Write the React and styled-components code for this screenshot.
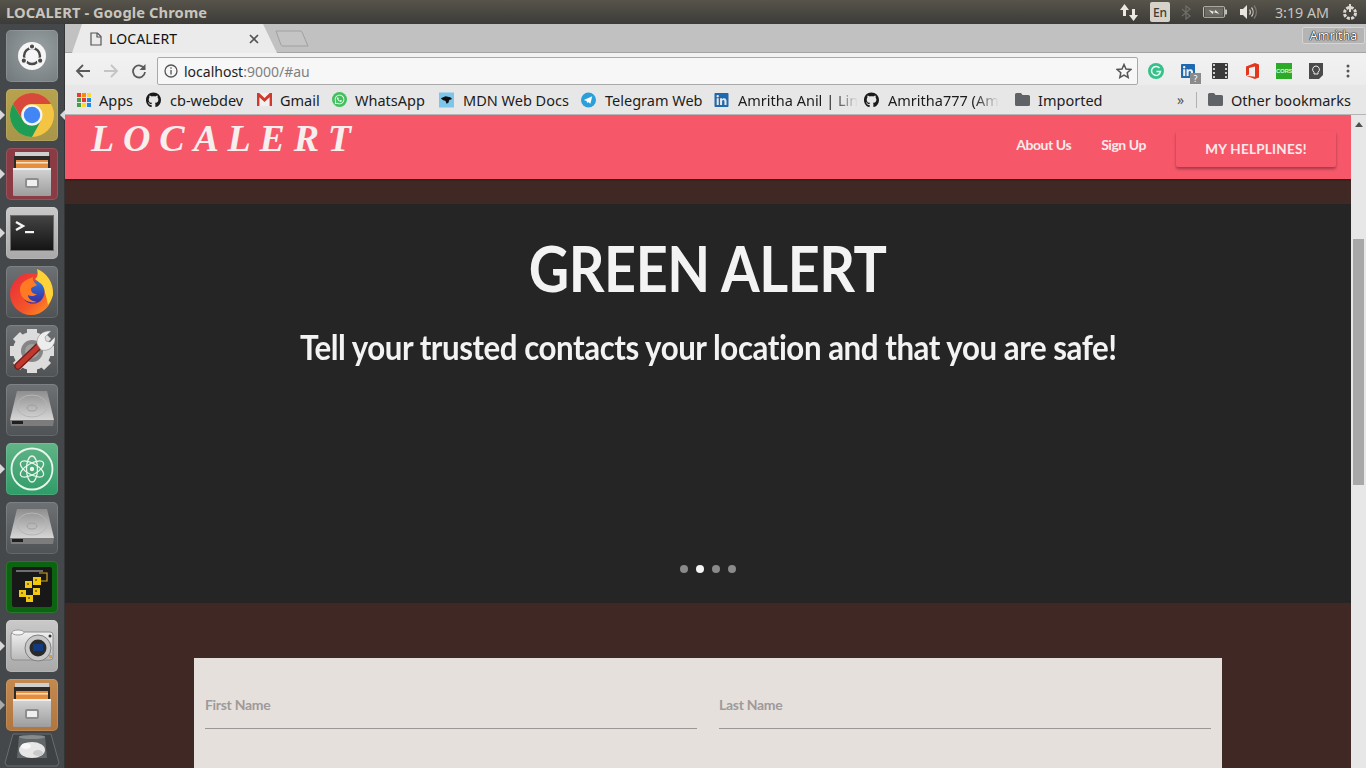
import React from "react";
import styled, { createGlobalStyle } from "styled-components";
import { FaGithub, FaWhatsapp, FaLinkedin } from "react-icons/fa";

const GlobalStyle = createGlobalStyle`
  html, body {
    margin: 0;
    padding: 0;
    height: 100%;
    overflow: hidden;
    background: #402825;
  }
  * { box-sizing: border-box; }
`;

const UI_FONT = `"Noto Sans", "Open Sans", sans-serif`;
const PAGE_FONT = `Lato, "Open Sans", sans-serif`;

const Desktop = styled.div`
  width: 1366px;
  height: 768px;
  display: flex;
  flex-direction: column;
  overflow: hidden;
`;

const TopBar = styled.div`
  height: 24px;
  flex: none;
  display: flex;
  align-items: center;
  justify-content: space-between;
  padding-left: 6px;
  background: linear-gradient(#57544c, #3c3b37);
  font-family: ${UI_FONT};
`;

const WindowTitle = styled.div`
  font-size: 14.7px;
  font-weight: 700;
  color: #c9c5bc;
  letter-spacing: 0.1px;
`;

const Tray = styled.div`
  display: flex;
  align-items: center;
  height: 24px;
`;

const TraySlot = styled.div`
  width: ${(p) => p.$w}px;
  height: 24px;
  flex: none;
  display: flex;
  align-items: center;
  justify-content: center;
`;

const LangBadge = styled.div`
  width: 20px;
  height: 20px;
  border-radius: 2px;
  background: #d6d2c9;
  color: #3c3b37;
  font-size: 12px;
  font-weight: 500;
  display: flex;
  align-items: center;
  justify-content: center;
`;

const Clock = styled.div`
  font-size: 14.3px;
  color: #c9c5bc;
  white-space: nowrap;
`;

const Body = styled.div`
  flex: 1;
  display: flex;
  min-height: 0;
`;

const Launcher = styled.div`
  width: 65px;
  flex: none;
  display: flex;
  flex-direction: column;
  gap: 7px;
  padding: 6px 7px 0 6px;
  background: #45484a;
  border-right: 1px solid #333537;
`;

const Tile = styled.div`
  position: relative;
  width: 52px;
  height: 52px;
  flex: none;
  border-radius: 5px;
  background: ${(p) => p.$bg};
  box-shadow: inset 0 0 0 1px rgba(255, 255, 255, 0.12);
  display: flex;
  align-items: center;
  justify-content: center;
`;

const TrashTile = styled.div`
  width: 56px;
  height: 36px;
  flex: none;
  margin: -5px 0 0 -2px;
`;

const Pip = styled.span`
  position: absolute;
  left: -6px;
  top: 21px;
  border-left: 5px solid ${(p) => (p.$hollow ? "#aaa" : "#d8d8d8")};
  border-top: 5px solid transparent;
  border-bottom: 5px solid transparent;
`;

const ActiveArrow = styled.span`
  position: absolute;
  right: -7px;
  top: 21px;
  border-right: 5px solid #d8d8d8;
  border-top: 5px solid transparent;
  border-bottom: 5px solid transparent;
`;

const ChromeWindow = styled.div`
  flex: 1;
  min-width: 0;
  display: flex;
  flex-direction: column;
`;

const TabStrip = styled.div`
  height: 29px;
  flex: none;
  display: flex;
  align-items: flex-start;
  justify-content: space-between;
  background: #c1c1c1;
  border-bottom: 1px solid #a4a4a4;
  font-family: ${UI_FONT};
`;

const TabGroup = styled.div`
  display: flex;
  align-items: flex-start;
  height: 28px;
  padding-left: 7px;
`;

const Tab = styled.div`
  width: 205px;
  height: 29px;
  padding: 0 18px 0 18px;
  display: flex;
  align-items: center;
  gap: 7px;
  background: #ebebeb;
  clip-path: polygon(0 100%, 10px 0, 191px 0, 205px 100%);
  font-size: 14px;
  color: #111;
`;

const TabTitle = styled.span`
  flex: 1;
  letter-spacing: 0.1px;
`;

const NewTab = styled.svg`
  width: 36px;
  height: 18px;
  margin: 6px 0 0 -3px;
`;

const ProfileChip = styled.div`
  width: 63px;
  height: 17px;
  margin: 3px 1px 0 0;
  border: 1px solid #d4d4d4;
  border-radius: 2px;
  background: #b4b4b4;
  color: #fff;
  font-size: 12.5px;
  line-height: 15px;
  text-align: center;
  text-shadow: 0 0 1px #000, 0 0 1px #000, 0 0 1px #000;
`;

const Toolbar = styled.div`
  height: 32px;
  flex: none;
  display: flex;
  align-items: flex-start;
  padding-top: 4px;
  background: linear-gradient(#f2f2f2, #ececec);
  font-family: ${UI_FONT};
`;

const NavButton = styled.div`
  width: 28px;
  height: 28px;
  flex: none;
  display: flex;
  align-items: center;
  justify-content: center;
`;

const NavGroup = styled.div`
  display: flex;
  width: 92px;
  padding-left: 4px;
`;

const Omnibox = styled.div`
  width: 981px;
  height: 28px;
  flex: none;
  display: flex;
  align-items: center;
  padding: 0 5px 0 6px;
  gap: 6px;
  background: #f7f7f7;
  border: 1px solid #a9a9a9;
  border-radius: 2px;
  font-size: 14px;
`;

const UrlText = styled.div`
  flex: 1;
  color: #222;
`;

const UrlMuted = styled.span`
  color: #808080;
`;

const Extensions = styled.div`
  display: flex;
  align-items: center;
  flex: 1;
  padding-left: 2px;
`;

const ExtSlot = styled.div`
  position: relative;
  width: 32px;
  height: 28px;
  flex: none;
  display: flex;
  align-items: center;
  justify-content: center;
`;

const ExtBadge = styled.span`
  position: absolute;
  right: 3px;
  bottom: 1px;
  width: 11px;
  height: 11px;
  background: #8a8a8a;
  color: #fff;
  font-size: 9px;
  line-height: 11px;
  text-align: center;
`;

const CorsTag = styled.span`
  width: 16px;
  height: 16px;
  background: #2bab27;
  color: #d8f5d4;
  font-family: "Liberation Sans", sans-serif;
  font-size: 6px;
  font-weight: 700;
  line-height: 16px;
  text-align: center;
  letter-spacing: -0.3px;
`;

const BookmarkBar = styled.div`
  height: 30px;
  flex: none;
  display: flex;
  align-items: center;
  padding-left: 11px;
  background: #e7e7e7;
  border-bottom: 1px solid #b5b5b5;
  font-family: ${UI_FONT};
`;

const Bookmark = styled.div`
  width: ${(p) => p.$w}px;
  flex: none;
  display: flex;
  align-items: center;
  gap: ${(p) => p.$gap ?? 9}px;
  font-size: 14.5px;
  color: #1c1c1c;
  white-space: nowrap;
`;

const BookmarkIcon = styled.span`
  width: 15px;
  height: 16px;
  flex: none;
  display: flex;
  align-items: center;
  justify-content: center;
`;

const WhatsBadge = styled.span`
  width: 15px;
  height: 15px;
  border-radius: 50%;
  background: #3fc15c;
  display: flex;
  align-items: center;
  justify-content: center;
`;

const BookmarkLabel = styled.span`
  ${(p) =>
    p.$fade &&
    `
    -webkit-mask-image: linear-gradient(90deg, #000 78%, transparent);
    mask-image: linear-gradient(90deg, #000 78%, transparent);
  `}
`;

const Chevrons = styled.div`
  width: 19px;
  flex: none;
  color: #555;
  font-size: 14px;
`;

const BarDivider = styled.div`
  width: 1px;
  height: 16px;
  flex: none;
  margin-right: 11px;
  background: #b0b0b0;
`;

const Viewport = styled.div`
  flex: 1;
  min-height: 0;
  display: flex;
  overflow: hidden;
`;

const Page = styled.div`
  flex: 1;
  min-width: 0;
  display: flex;
  flex-direction: column;
  background: #402825;
  font-family: ${PAGE_FONT};
`;

const Navbar = styled.header`
  height: 64px;
  flex: none;
  display: flex;
  align-items: flex-start;
  justify-content: space-between;
  padding: 0 15px 0 26px;
  background: #f6586a;
  box-shadow: 0 1px 2px rgba(0, 0, 0, 0.35);
`;

const Logo = styled.div`
  font-family: "Liberation Serif", serif;
  font-style: italic;
  font-weight: 700;
  font-size: 38px;
  line-height: 46px;
  letter-spacing: 8.8px;
  color: #f7eeee;
  white-space: nowrap;
`;

const NavLinks = styled.nav`
  display: flex;
  align-items: center;
  height: 60px;
  margin-top: 1px;
`;

const NavLink = styled.a`
  font-size: 14px;
  font-weight: 700;
  color: #fbeaec;
  margin-right: 30px;
  margin-top: -4px;
  letter-spacing: -0.45px;
`;

const HelplineButton = styled.button`
  width: 160px;
  height: 36px;
  margin-top: 6px;
  border: none;
  border-radius: 2px;
  background: #f6586a;
  box-shadow: 0 2px 3px rgba(0, 0, 0, 0.35);
  color: #fbeaec;
  font-family: ${PAGE_FONT};
  font-size: 13.5px;
  font-weight: 700;
  letter-spacing: 0.25px;
`;

const Carousel = styled.section`
  height: 399px;
  flex: none;
  margin-top: 25px;
  padding-top: 29px;
  display: flex;
  flex-direction: column;
  align-items: center;
  background: #252525;
  color: #f3f3f3;
`;

const Headline = styled.h1`
  margin: 0;
  font-size: 64px;
  line-height: 70px;
  font-weight: 700;
  letter-spacing: -0.5px;
  transform: scaleX(0.87);
`;

const Subhead = styled.h2`
  margin: 22px 0 0;
  font-size: 35px;
  line-height: 42px;
  font-weight: 700;
  letter-spacing: -0.5px;
  white-space: nowrap;
  transform: scaleX(0.893);
`;

const Dots = styled.div`
  margin-top: auto;
  margin-bottom: 30px;
  display: flex;
  gap: 8px;
`;

const Dot = styled.span`
  width: 8px;
  height: 8px;
  border-radius: 50%;
  background: ${(p) => (p.$active ? "#f4f4f4" : "#8a8a8a")};
`;

const FormCard = styled.form`
  width: 1028px;
  height: 300px;
  flex: none;
  margin: 55px 0 0 129px;
  padding: 36px 11px 0;
  display: grid;
  grid-template-columns: 1fr 1fr;
  grid-auto-rows: min-content;
  column-gap: 22px;
  background: #e6e0dd;
`;

const Field = styled.div`
  height: 35px;
  padding-bottom: 14px;
  display: flex;
  align-items: center;
  border-bottom: 1px solid #9b9797;
  font-size: 14px;
  font-weight: 700;
  color: #9e9a99;
  letter-spacing: -0.3px;
`;

const Scrollbar = styled.div`
  width: 15px;
  flex: none;
  display: flex;
  flex-direction: column;
  align-items: center;
  background: #e7e7e7;
`;

const ScrollUp = styled.span`
  margin-top: 7px;
  border-bottom: 5px solid #505050;
  border-left: 4px solid transparent;
  border-right: 4px solid transparent;
`;

const ScrollThumb = styled.div`
  width: 11px;
  height: 246px;
  margin-top: 112px;
  background: #a8a8a8;
`;

function UbuntuIcon() {
  return (
    <svg width="32" height="32" viewBox="0 0 32 32">
      <circle cx="16" cy="16" r="14" fill="#f6f6f6" />
      <circle cx="16" cy="16" r="8" fill="none" stroke="#4a4a4a" strokeWidth="2.4" />
      <circle cx="16" cy="6.500" r="2.700" fill="#4a4a4a" stroke="#f6f6f6" strokeWidth="1.200" />
      <circle cx="7.800" cy="20.700" r="2.700" fill="#4a4a4a" stroke="#f6f6f6" strokeWidth="1.200" />
      <circle cx="24.200" cy="20.700" r="2.700" fill="#4a4a4a" stroke="#f6f6f6" strokeWidth="1.200" />
    </svg>
  );
}

function ChromeIcon() {
  return (
    <svg width="46" height="46" viewBox="0 0 46 46">
      <circle cx="23" cy="23" r="22" fill="#f4c542" />
      <path d="M3.950 12A22 22 0 0 1 42.050 12H23A10.600 10.600 0 0 0 13.820 28.300z" fill="#d9493b" />
      <path d="M23 45A22 22 0 0 1 3.950 12L13.820 28.300A10.600 10.600 0 0 0 32.180 28.300z" fill="#1f9d55" />
      <circle cx="23" cy="23" r="10.600" fill="#f4f4f4" />
      <circle cx="23" cy="23" r="8.200" fill="#4285f4" />
    </svg>
  );
}

function CabinetIcon({ id }) {
  return (
    <svg width="40" height="44" viewBox="0 0 40 44">
      <defs>
        <linearGradient id={id} x1="0" y1="0" x2="0" y2="1">
          <stop offset="0" stopColor="#d4d4d4" />
          <stop offset="1" stopColor="#9d9d9d" />
        </linearGradient>
      </defs>
      <rect x="3" y="0" width="34" height="5" fill="#cfcfcf" />
      <rect x="2" y="4" width="36" height="13" fill="#2e2a28" />
      <rect x="4" y="8" width="32" height="9" fill="#e78d3e" />
      <rect x="4" y="10" width="32" height="1.500" fill="#f8e2c4" />
      <rect x="1" y="16" width="38" height="28" rx="1" fill={`url(#${id})`} />
      <rect x="1" y="16" width="38" height="2" fill="#efefef" />
      <rect x="13" y="26" width="14" height="10" rx="2" fill="#8d8d8d" />
      <rect x="15" y="28" width="10" height="6" rx="0.500" fill="#efefef" />
    </svg>
  );
}

function TerminalIcon() {
  return (
    <svg width="44" height="36" viewBox="0 0 44 36">
      <defs>
        <linearGradient id="term" x1="0" y1="0" x2="0" y2="1">
          <stop offset="0" stopColor="#444" />
          <stop offset="1" stopColor="#141414" />
        </linearGradient>
      </defs>
      <rect x="0.500" y="0.500" width="43" height="35" fill="url(#term)" stroke="#6d6d6d" />
      <path d="M6 7l7 4-7 4" fill="none" stroke="#f4f4f4" strokeWidth="2.400" />
      <rect x="15" y="16" width="9" height="2.200" fill="#f4f4f4" />
    </svg>
  );
}

function FirefoxIcon() {
  return (
    <svg width="46" height="48" viewBox="0 0 46 48">
      <defs>
        <linearGradient id="fxRing" x1="0" y1="0" x2="1" y2="1">
          <stop offset="0" stopColor="#e8283c" />
          <stop offset="0.6" stopColor="#f4552a" />
          <stop offset="1" stopColor="#ff9a1f" />
        </linearGradient>
        <linearGradient id="fxGlobe" x1="0" y1="0" x2="0" y2="1">
          <stop offset="0" stopColor="#2f7bd9" />
          <stop offset="1" stopColor="#3a2a9e" />
        </linearGradient>
      </defs>
      <circle cx="22" cy="26" r="21" fill="url(#fxRing)" />
      <path d="M28 1c10 4 17 14 16 26-1 4-3 7-5 10-2-10-4-20-13-26 3-2 3-6 2-10z" fill="#ffd23a" />
      <circle cx="24" cy="24" r="11.500" fill="url(#fxGlobe)" />
      <path d="M24 9c-4 2-9 3-12 8-2 4-1 10 3 14 3 3 9 4 13 3-5-1-9-3-9-7 3 2 7 1 9-1-4 0-6-2-6-5 1-3 4-2 6-4-3-3-5-5-4-8z" fill="#ff7a22" />
    </svg>
  );
}

function GearWrenchIcon() {
  const teeth = [0, 45, 90, 135, 180, 225, 270, 315];
  return (
    <svg width="46" height="46" viewBox="0 0 46 46">
      <g fill="#dcdcdc">
        {teeth.map((a) => (
          <rect key={a} x="18" y="1" width="10" height="10" transform={`rotate(${a} 23 23)`} />
        ))}
      </g>
      <circle cx="23" cy="23" r="13" fill="none" stroke="#dcdcdc" strokeWidth="12" />
      <circle cx="23" cy="23" r="11" fill="#858585" />
      <circle cx="23" cy="23" r="7" fill="#a0a0a0" />
      <path d="M9 38L32 16" stroke="#6f1d17" strokeWidth="7.500" strokeLinecap="round" />
      <path d="M9 38L32 16" stroke="#c0392f" strokeWidth="5" strokeLinecap="round" />
      <path d="M28 16c-1-7 5-14 14-13l-6 6 1 4 4 1 5-5c1 9-6 15-14 13z" fill="#ededed" stroke="#8a8a8a" strokeWidth="0.600" />
    </svg>
  );
}

function DriveIcon({ id }) {
  return (
    <svg width="46" height="40" viewBox="0 0 46 40">
      <defs>
        <linearGradient id={id} x1="0" y1="0" x2="0" y2="1">
          <stop offset="0" stopColor="#8e8e8e" />
          <stop offset="1" stopColor="#d6d6d6" />
        </linearGradient>
      </defs>
      <path d="M8 1h30l7 29H1z" fill={`url(#${id})`} />
      <ellipse cx="23" cy="16" rx="15" ry="11" fill="none" stroke="#b5b5b5" />
      <ellipse cx="23" cy="18" rx="5" ry="3" fill="none" stroke="#a0a0a0" />
      <path d="M1 30h44l-1 6H2z" fill="#7c7c7c" />
      <rect x="3" y="31" width="11" height="3" fill="#1f1f1f" />
    </svg>
  );
}

function AtomIcon() {
  return (
    <svg width="44" height="44" viewBox="0 0 44 44" fill="none" stroke="#e8f5ec" strokeWidth="1.300">
      <circle cx="22" cy="22" r="20.500" strokeWidth="1.800" />
      <ellipse cx="22" cy="22" rx="13" ry="5.500" transform="rotate(30 22 22)" />
      <ellipse cx="22" cy="22" rx="13" ry="5.500" transform="rotate(-30 22 22)" />
      <ellipse cx="22" cy="22" rx="13" ry="5.500" transform="rotate(90 22 22)" />
      <circle cx="22" cy="22" r="2.200" fill="#e8f5ec" stroke="none" />
    </svg>
  );
}

function ChipIcon() {
  const squares = [
    [21, 10, 7],
    [13, 14, 6],
    [21, 21, 6],
    [7, 23, 6],
    [14, 28, 6],
  ];
  return (
    <svg width="40" height="40" viewBox="0 0 40 40">
      <rect width="40" height="40" rx="2" fill="#181818" />
      <rect x="4" y="3" width="27" height="2" fill="#6e6e6e" />
      <path d="M27 6h8v8h-7" fill="none" stroke="#d0a820" strokeWidth="1.200" />
      {squares.map(([x, y, s], i) => (
        <g key={i}>
          <rect x={x} y={y} width={s + 1} height={s + 1} fill="#f2c90f" />
          <rect x={x + 2} y={y + 2} width="2" height="2" fill="#8f7606" />
        </g>
      ))}
    </svg>
  );
}

function CameraIcon() {
  return (
    <svg width="44" height="36" viewBox="0 0 44 36">
      <defs>
        <linearGradient id="camBody" x1="0" y1="0" x2="0" y2="1">
          <stop offset="0" stopColor="#f0f0f0" />
          <stop offset="1" stopColor="#b9b9b9" />
        </linearGradient>
      </defs>
      <rect x="1" y="4" width="42" height="28" rx="3" fill="url(#camBody)" stroke="#8e8e8e" />
      <ellipse cx="8" cy="4.500" rx="6" ry="2.500" fill="#f4f4f4" stroke="#999" />
      <circle cx="28" cy="20" r="13" fill="#c8c8c8" stroke="#7f7f7f" />
      <circle cx="28" cy="20" r="8.500" fill="#2a2a2a" />
      <rect x="23" y="16" width="10" height="7" fill="#123a80" />
      <circle cx="40" cy="8" r="1.500" fill="#333" />
      <rect x="39" y="27" width="3" height="3" fill="#e69a2e" />
    </svg>
  );
}

function TrashIcon() {
  return (
    <svg width="56" height="34" viewBox="0 0 56 34">
      <path d="M9 1h38l8 29-2 3H3l-2-3z" fill="#3e4244" stroke="#6a6d6e" />
      <path d="M15 3h26l2 22H13z" fill="#62676a" />
      <ellipse cx="28" cy="4" rx="13" ry="2" fill="#878b8c" />
      <ellipse cx="28" cy="17" rx="13" ry="8" fill="#e6e6e6" />
      <ellipse cx="22" cy="13" rx="5" ry="3" fill="#f7f7f7" />
      <ellipse cx="34" cy="20" rx="5" ry="3" fill="#c9c9c9" />
    </svg>
  );
}

function GmailIcon() {
  return (
    <svg width="15" height="13" viewBox="0 0 15 13">
      <rect width="15" height="13" fill="#f1f1f1" />
      <path d="M0 0h2.200l5.300 5 5.300-5H15v13h-2.400V4.200L7.500 9 2.400 4.200V13H0z" fill="#d0392b" />
    </svg>
  );
}

function AppsGrid() {
  const colors = ["#e53935", "#fb8c00", "#fdd835", "#43a047", "#e53935", "#1e88e5", "#43a047", "#fdd835", "#1e88e5"];
  return (
    <svg width="14" height="14" viewBox="0 0 14 14">
      {colors.map((c, i) => (
        <rect key={i} x={(i % 3) * 5} y={Math.floor(i / 3) * 5} width="4" height="4" fill={c} />
      ))}
    </svg>
  );
}

function MdnIcon() {
  return (
    <svg width="16" height="16" viewBox="0 0 16 16">
      <rect width="16" height="16" fill="#7cc6ec" />
      <path d="M2 6l5-2 5 1 2 2-3 1-1 3-2 1-1-3-3-1z" fill="#111" />
    </svg>
  );
}

function FolderIcon() {
  return (
    <svg width="15" height="13" viewBox="0 0 15 13">
      <path d="M0 1.500A1.500 1.500 0 0 1 1.500 0H6l1.500 2h6A1.500 1.500 0 0 1 15 3.500v8a1.500 1.500 0 0 1-1.500 1.500h-12A1.500 1.500 0 0 1 0 11.500z" fill="#5f6368" />
    </svg>
  );
}

const DARK_TILE = "linear-gradient(#6e7173,#505355)";
const LIGHT_TILE = "linear-gradient(#c9c9c9,#a9a9a9)";

const DOCK = [
  { bg: "radial-gradient(circle at 60% 40%,#9ba2a4,#70777a)", icon: <UbuntuIcon /> },
  { bg: "linear-gradient(#b7a34e,#a89549)", icon: <ChromeIcon />, pip: true, active: true },
  { bg: "#8a3b44", icon: <CabinetIcon id="cabA" />, pip: true },
  { bg: LIGHT_TILE, icon: <TerminalIcon />, pip: true },
  { bg: DARK_TILE, icon: <FirefoxIcon /> },
  { bg: DARK_TILE, icon: <GearWrenchIcon /> },
  { bg: DARK_TILE, icon: <DriveIcon id="hddA" /> },
  { bg: "linear-gradient(#62b487,#2f9c68)", icon: <AtomIcon />, pip: true },
  { bg: DARK_TILE, icon: <DriveIcon id="hddB" /> },
  { bg: "#0d6410", icon: <ChipIcon /> },
  { bg: LIGHT_TILE, icon: <CameraIcon />, pip: true },
  { bg: "linear-gradient(#c4894f,#b0763e)", icon: <CabinetIcon id="cabB" />, pip: true, hollow: true },
];

const BOOKMARKS = [
  { w: 70, gap: 8, label: "Apps", icon: <AppsGrid /> },
  { w: 111, label: "cb-webdev", icon: <FaGithub size={16} color="#1a1a1a" /> },
  { w: 75, gap: 8, label: "Gmail", icon: <GmailIcon /> },
  {
    w: 107,
    gap: 8,
    label: "WhatsApp",
    icon: (
      <WhatsBadge>
        <FaWhatsapp size={11} color="#fff" />
      </WhatsBadge>
    ),
  },
  { w: 142, label: "MDN Web Docs", icon: <MdnIcon /> },
  {
    w: 133,
    label: "Telegram Web",
    icon: (
      <svg width="16" height="16" viewBox="0 0 16 16">
        <circle cx="8" cy="8" r="8" fill="#2a9fd9" />
        <path d="M3 8l9-4-2 8-2.500-2-1 1.500-.5-2.500z" fill="#fff" />
      </svg>
    ),
  },
  { w: 150, label: "Amritha Anil | Lin", fade: true, icon: <FaLinkedin size={16} color="#1e69b0" /> },
  { w: 151, label: "Amritha777 (Am", fade: true, icon: <FaGithub size={16} color="#1a1a1a" /> },
  { w: 162, gap: 8, label: "Imported", icon: <FolderIcon /> },
];

export default function App() {
  return (
    <>
      <GlobalStyle />
      <Desktop>
        <TopBar>
          <WindowTitle>LOCALERT - Google Chrome</WindowTitle>
          <Tray>
            <TraySlot $w={42}>
              <svg width="18" height="17" viewBox="0 0 18 17" fill="#ece9e3">
                <path d="M4.500 0l4.500 6H6v6H3V6H0zM13.500 17L9 11h3V5h3v6h3z" />
              </svg>
            </TraySlot>
            <TraySlot $w={20}>
              <LangBadge>En</LangBadge>
            </TraySlot>
            <TraySlot $w={32}>
              <svg width="10" height="15" viewBox="0 0 10 15" fill="none" stroke="#6e6c66" strokeWidth="1.300">
                <path d="M1 4l8 7-4 3V1l4 3-8 7" />
              </svg>
            </TraySlot>
            <TraySlot $w={26}>
              <svg width="24" height="12" viewBox="0 0 25 12">
                <rect x="0.500" y="0.500" width="22" height="11" rx="1" fill="none" stroke="#c9c5bc" />
                <rect x="23" y="3.500" width="2" height="5" fill="#c9c5bc" />
                <rect x="2" y="2" width="19" height="8" fill="#6e6c66" />
                <path d="M6 4l6 2 1-2 4 4-6-2-1 2z" fill="#f0eee8" />
              </svg>
            </TraySlot>
            <TraySlot $w={42}>
              <svg width="20" height="16" viewBox="0 0 20 16" fill="none" stroke="#c9c5bc">
                <path d="M1 5h3l4-4v14l-4-4H1z" fill="#e8e5df" stroke="none" />
                <path d="M10.500 5.500a4 4 0 0 1 0 5M12.500 3.500a7 7 0 0 1 0 9" strokeWidth="1.200" />
                <path d="M15 1.500a10 10 0 0 1 0 13" stroke="#7b7972" strokeWidth="1.200" />
              </svg>
            </TraySlot>
            <TraySlot $w={64}>
              <Clock>3:19 AM</Clock>
            </TraySlot>
            <TraySlot $w={32}>
              <svg width="18" height="18" viewBox="0 0 18 18" fill="none" stroke="#dcd9d2" strokeWidth="2">
                <circle cx="9" cy="10" r="5.500" strokeDasharray="3 1.300" strokeWidth="3" />
                <path d="M9 1v8" stroke="#dcd9d2" />
              </svg>
            </TraySlot>
          </Tray>
        </TopBar>
        <Body>
          <Launcher>
            {DOCK.map((item, i) => (
              <Tile key={i} $bg={item.bg}>
                {item.pip && <Pip $hollow={item.hollow} />}
                {item.icon}
                {item.active && <ActiveArrow />}
              </Tile>
            ))}
            <TrashTile>
              <TrashIcon />
            </TrashTile>
          </Launcher>
          <ChromeWindow>
            <TabStrip>
              <TabGroup>
                <Tab>
                  <svg width="12" height="14" viewBox="0 0 12 14" fill="none" stroke="#555" strokeWidth="1.200">
                    <path d="M1 1h6.500L11 4.500V13H1z" />
                    <path d="M7 1v4h4" />
                  </svg>
                  <TabTitle>LOCALERT</TabTitle>
                  <svg width="10" height="10" viewBox="0 0 10 10" stroke="#555" strokeWidth="1.700">
                    <path d="M1 1l8 8M9 1l-8 8" />
                  </svg>
                </Tab>
                <NewTab viewBox="0 0 36 18">
                  <path d="M2 1h24a2 2 0 0 1 2 1l6 14H9a2 2 0 0 1-2-1z" fill="#c4c4c4" stroke="#a0a0a0" />
                </NewTab>
              </TabGroup>
              <ProfileChip>Amritha</ProfileChip>
            </TabStrip>
            <Toolbar>
              <NavGroup>
                <NavButton>
                  <svg width="16" height="16" viewBox="0 0 16 16" fill="none" stroke="#5a5a5a" strokeWidth="1.800">
                    <path d="M15 8H2M8 2L2 8l6 6" />
                  </svg>
                </NavButton>
                <NavButton>
                  <svg width="16" height="16" viewBox="0 0 16 16" fill="none" stroke="#c4c4c4" strokeWidth="1.800">
                    <path d="M1 8h13M8 2l6 6-6 6" />
                  </svg>
                </NavButton>
                <NavButton>
                  <svg width="16" height="16" viewBox="0 0 16 16" fill="none" stroke="#5a5a5a" strokeWidth="1.800">
                    <path d="M13.500 6A6 6 0 1 0 14 9" />
                    <path d="M14.500 1v6h-6z" fill="#5a5a5a" stroke="none" />
                  </svg>
                </NavButton>
              </NavGroup>
              <Omnibox>
                <svg width="14" height="14" viewBox="0 0 14 14" fill="none" stroke="#555" strokeWidth="1.300">
                  <circle cx="7" cy="7" r="6" />
                  <path d="M7 6v4.500M7 3.300v1.500" />
                </svg>
                <UrlText>
                  localhost<UrlMuted>:9000/#au</UrlMuted>
                </UrlText>
                <svg width="16" height="16" viewBox="0 0 16 16" fill="none" stroke="#555" strokeWidth="1.500">
                  <path d="M8 1.500l2 4.500 4.800.5-3.600 3.200 1 4.800L8 12.100l-4.200 2.400 1-4.800L1.200 6.500 6 6z" />
                </svg>
              </Omnibox>
              <Extensions>
                <ExtSlot>
                  <svg width="16" height="16" viewBox="0 0 16 16">
                    <circle cx="8" cy="8" r="8" fill="#37c08a" />
                    <path d="M11.500 5A4.500 4.500 0 1 0 12.500 8.500H8.500" fill="none" stroke="#e8fff4" strokeWidth="1.500" />
                  </svg>
                </ExtSlot>
                <ExtSlot>
                  <FaLinkedin size={16} color="#1e69b0" />
                  <ExtBadge>?</ExtBadge>
                </ExtSlot>
                <ExtSlot>
                  <svg width="16" height="16" viewBox="0 0 16 16">
                    <rect width="16" height="16" rx="1" fill="#3a3a3a" />
                    {[1, 5, 9, 13].map((y) => (
                      <React.Fragment key={y}>
                        <rect x="1" y={y} width="2" height="2" fill="#ccc" />
                        <rect x="13" y={y} width="2" height="2" fill="#ccc" />
                      </React.Fragment>
                    ))}
                  </svg>
                </ExtSlot>
                <ExtSlot>
                  <svg width="15" height="16" viewBox="0 0 15 16">
                    <path d="M1 3.500L10 0l4 1.500v13L10 16l-9-3.200 9 1V3.500L4 5v6.500L1 12.800z" fill="#e3361c" />
                  </svg>
                </ExtSlot>
                <ExtSlot>
                  <CorsTag>CORS</CorsTag>
                </ExtSlot>
                <ExtSlot>
                  <svg width="16" height="16" viewBox="0 0 16 16">
                    <path d="M1 0h14v12l-4 4H1z" fill="#4a4a4a" />
                    <path d="M8 3a3.500 3.500 0 0 0-2 6.300V11h4V9.300A3.500 3.500 0 0 0 8 3z" fill="none" stroke="#eee" />
                  </svg>
                </ExtSlot>
                <ExtSlot>
                  <svg width="4" height="14" viewBox="0 0 4 14" fill="#555">
                    <circle cx="2" cy="2" r="1.500" />
                    <circle cx="2" cy="7" r="1.500" />
                    <circle cx="2" cy="12" r="1.500" />
                  </svg>
                </ExtSlot>
              </Extensions>
            </Toolbar>
            <BookmarkBar>
              {BOOKMARKS.map((b) => (
                <Bookmark key={b.label} $w={b.w} $gap={b.gap}>
                  <BookmarkIcon>{b.icon}</BookmarkIcon>
                  <BookmarkLabel $fade={b.fade}>{b.label}</BookmarkLabel>
                </Bookmark>
              ))}
              <Chevrons>»</Chevrons>
              <BarDivider />
              <Bookmark $w={150} $gap={8}>
                <BookmarkIcon>
                  <FolderIcon />
                </BookmarkIcon>
                Other bookmarks
              </Bookmark>
            </BookmarkBar>
            <Viewport>
              <Page>
                <Navbar>
                  <Logo>LOCALERT</Logo>
                  <NavLinks>
                    <NavLink>About Us</NavLink>
                    <NavLink>Sign Up</NavLink>
                    <HelplineButton type="button">MY HELPLINES!</HelplineButton>
                  </NavLinks>
                </Navbar>
                <Carousel>
                  <Headline>GREEN ALERT</Headline>
                  <Subhead>Tell your trusted contacts your location and that you are safe!</Subhead>
                  <Dots>
                    <Dot />
                    <Dot $active />
                    <Dot />
                    <Dot />
                  </Dots>
                </Carousel>
                <FormCard>
                  <Field>First Name</Field>
                  <Field>Last Name</Field>
                </FormCard>
              </Page>
              <Scrollbar>
                <ScrollUp />
                <ScrollThumb />
              </Scrollbar>
            </Viewport>
          </ChromeWindow>
        </Body>
      </Desktop>
    </>
  );
}
